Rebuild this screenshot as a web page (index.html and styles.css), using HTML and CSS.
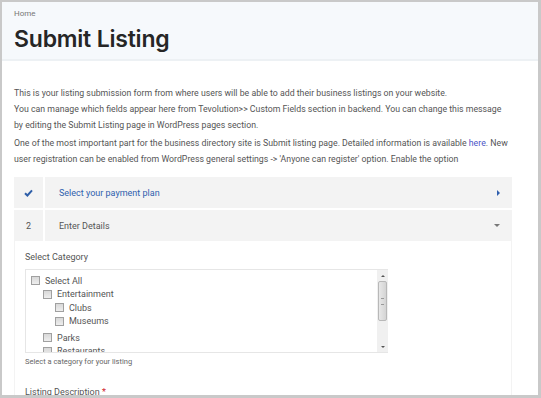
FILE: index.html
```html
<!DOCTYPE html>
<html lang="en">
<head>
    <meta charset="UTF-8">
    <title>Submit Listing</title>
    <link rel="stylesheet" href="styles.css">
</head>
<body>
    <div class="frame">
        <header class="page-head">
            <div class="crumb">Home</div>
            <h1>Submit Listing</h1>
        </header>
        <div class="content">
            <p>This is your listing submission form from where users will be able to add their business listings on your website.<br>
            You can manage which fields appear here from Tevolution&gt;&gt; Custom Fields section in backend. You can change this message by editing the Submit Listing page in WordPress pages section.</p>
            <p>One of the most important part for the business directory site is Submit listing page. Detailed information is available <a href="#">here</a>. New user registration can be enabled from WordPress general settings -&gt; 'Anyone can register' option. Enable the option</p>

            <div class="steps">
                <div class="step done">
                    <span class="num">
                        <svg width="9" height="8" viewBox="0 0 9 8"><path d="M1 4.2 L3.4 6.5 L8 1.3" fill="none" stroke="#2e5ea8" stroke-width="2"/></svg>
                    </span>
                    <span class="label">Select your payment plan</span>
                    <span class="arrow right"></span>
                </div>
                <div class="step">
                    <span class="num">2</span>
                    <span class="label">Enter Details</span>
                    <span class="arrow down"></span>
                </div>
                <div class="step-body">
                    <div class="field-label">Select Category</div>
                    <div class="listbox">
                        <ul class="cats">
                            <li><span class="cb"></span>Select All</li>
                            <li class="l1"><span class="cb"></span>Entertainment</li>
                            <li class="l2"><span class="cb"></span>Clubs</li>
                            <li class="l2"><span class="cb"></span>Museums</li>
                            <li class="l1"><span class="cb"></span>Parks</li>
                            <li class="l1"><span class="cb"></span>Restaurants</li>
                        </ul>
                        <div class="scrollbar">
                            <span class="sb-btn up"></span>
                            <span class="sb-thumb"><i></i></span>
                            <span class="sb-track"></span>
                            <span class="sb-btn dn"></span>
                        </div>
                    </div>
                    <div class="hint">Select a category for your listing</div>
                    <div class="field-label desc">Listing Description <span class="req">*</span></div>
                </div>
            </div>
        </div>
    </div>
</body>
</html>
```

FILE: styles.css
```css
body {
    margin: 0;
    font-family: 'Roboto', 'Liberation Sans', sans-serif;
    color: #555;
    background: #fff;
}

.frame {
    height: 398px;
    box-sizing: border-box;
    border-style: solid;
    border-color: #c9c9c9;
    border-width: 2px 3px 3px 2px;
    overflow: hidden;
}

.page-head {
    background: #f6f9fc;
    border-bottom: 2px solid #edf1f4;
    padding: 7px 12px 5px;
}

.crumb {
    font-size: 8px;
    color: #777;
    line-height: 10px;
}

.page-head h1 {
    margin: 5px 0 0;
    font-family: 'Inter', sans-serif;
    font-weight: 600;
    font-size: 23px;
    line-height: 30px;
    color: #262626;
    letter-spacing: -0.2px;
}

.content {
    padding: 24px 26px 0 12px;
}

.content p {
    margin: 0 0 2px;
    font-size: 8.75px;
    line-height: 16px;
    color: #555;
}

.content a {
    color: #4b55c8;
    text-decoration: none;
}

.steps {
    margin-top: 10px;
}

.step {
    display: flex;
    align-items: center;
    height: 31px;
    background: #f3f3f3;
    border-bottom: 2px solid #fff;
    font-size: 9px;
}

.step .num {
    width: 29px;
    height: 100%;
    display: flex;
    align-items: center;
    justify-content: center;
    border-right: 2px solid #fff;
    color: #555;
}

.step .label {
    flex: 1;
    padding-left: 14px;
}

.step.done .label {
    color: #2f5fae;
}

.arrow {
    width: 0;
    height: 0;
    margin-right: 12px;
    border-style: solid;
}

.arrow.right {
    border-width: 3px 0 3px 3px;
    border-color: transparent transparent transparent #2f5fae;
}

.arrow.down {
    border-width: 3px 3px 0 3px;
    border-color: #777 transparent transparent transparent;
}

.step-body {
    border-left: 1px solid #f3f3f3;
    border-right: 1px solid #f3f3f3;
    padding: 10px 10px 0;
    margin-top: -2px;
}

.field-label {
    font-size: 9px;
    line-height: 12px;
    color: #555;
}

.listbox {
    display: flex;
    width: 362px;
    height: 82px;
    margin-top: 6px;
    border: 1px solid #e6e6e6;
    border-right: none;
}

.cats {
    flex: 1;
    list-style: none;
    margin: 0;
    padding: 4px 0 0 5px;
    overflow: hidden;
    font-size: 9px;
}

.cats li {
    display: flex;
    align-items: center;
    height: 13.5px;
    color: #555;
}

.cats li.l1 {
    padding-left: 12px;
}

.cats li.l2 {
    padding-left: 24px;
}

.cats li:nth-child(5) {
    margin-top: 3px;
}

.cb {
    width: 7px;
    height: 7px;
    border: 1px solid #a0a0a0;
    background: linear-gradient(#d8d8d8, #eeeeee);
    margin-right: 5px;
}

.scrollbar {
    width: 11px;
    display: flex;
    flex-direction: column;
    background: #f0f0f0;
}

.sb-btn {
    height: 11px;
    display: flex;
    align-items: center;
    justify-content: center;
}

.sb-btn::after {
    content: '';
    border-style: solid;
}

.sb-btn.up::after {
    border-width: 0 2px 2px 2px;
    border-color: transparent transparent #555 transparent;
}

.sb-btn.dn::after {
    border-width: 2px 2px 0 2px;
    border-color: #555 transparent transparent transparent;
}

.sb-thumb {
    height: 38px;
    margin: 0 1px;
    border: 1px solid #b8b8b8;
    border-radius: 2px;
    background: linear-gradient(to right, #e8e8e8, #d4d4d4);
    display: flex;
    align-items: center;
    justify-content: center;
}

.sb-thumb i {
    width: 3px;
    height: 5px;
    border-top: 1px solid #999;
    border-bottom: 1px solid #999;
}

.sb-track {
    flex: 1;
}

.hint {
    font-size: 7.5px;
    color: #666;
    margin-top: 4px;
}

.field-label.desc {
    margin-top: 20px;
}

.req {
    color: #d0202a;
}
```
